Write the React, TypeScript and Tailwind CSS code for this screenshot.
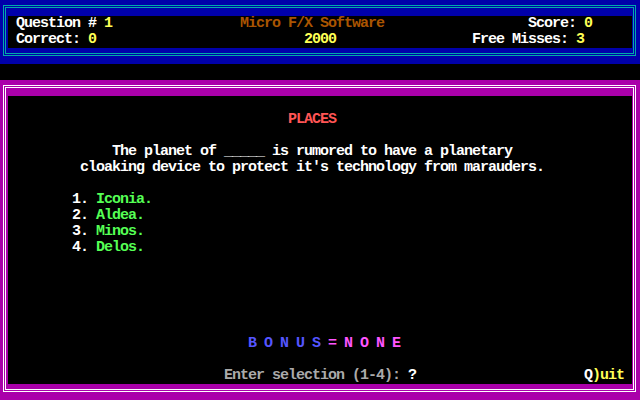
const Frame = ({
  bg,
  line,
  height,
  children
}: {
  bg: string;
  line: string;
  height: string;
  children: React.ReactNode;
}) => (
  <div className={`${bg} ${height} pt-[5px] pl-[3px] pr-[4px] pb-[8px]`}>
    <div className={`h-full border ${line} p-px`}>
      <div className={`h-full border ${line} pt-2 pl-[2px] pr-px pb-[5px]`}>
        <div className="h-full bg-black">{children}</div>
      </div>
    </div>
  </div>
);

const Row = ({ pad = "", children }: { pad?: string; children?: React.ReactNode }) => (
  <div className={`flex h-4 whitespace-pre ${pad}`}>{children}</div>
);

const options = ["Iconia.", "Aldea.", "Minos.", "Delos."];

export default function App() {
  return (
    <div
      className="w-[640px] h-[400px] bg-black overflow-hidden text-[15px] leading-4 font-bold tracking-[-1px] text-white"
      style={{ fontFamily: '"Liberation Mono", "DejaVu Sans Mono", monospace' }}
    >
      <Frame bg="bg-[#0000aa]" line="border-[#00aaaa]" height="h-16">
        <Row>
          <span className="w-[232px] pl-2">
            Question # <span className="text-[#ffff55]">1</span>
          </span>
          <span className="w-[288px] text-[#aa5500]">Micro F/X Software</span>
          <span>
            Score: <span className="text-[#ffff55]">0</span>
          </span>
        </Row>
        <Row>
          <span className="w-[296px] pl-2">
            Correct: <span className="text-[#ffff55]">0</span>
          </span>
          <span className="w-[168px] text-[#ffff55]">2000</span>
          <span>
            Free Misses: <span className="text-[#ffff55]">3</span>
          </span>
        </Row>
      </Frame>

      <div className="h-4" />

      <Frame bg="bg-[#aa00aa]" line="border-white" height="h-[320px]">
        <div className="flex flex-col h-full">
          <Row />
          <Row pad="pl-[280px]">
            <span className="text-[#ff5555]">PLACES</span>
          </Row>
          <Row />
          <Row pad="pl-[104px]">The planet of _____ is rumored to have a planetary</Row>
          <Row pad="pl-[72px]">cloaking device to protect it's technology from marauders.</Row>
          <Row />
          {options.map((o, i) => (
            <Row key={o} pad="pl-[64px]">
              {i + 1}. <span className="text-[#55ff55]">{o}</span>
            </Row>
          ))}
          <div className="flex-1" />
          <Row pad="pl-[240px]">
            <span className="text-[#5555ff]">B O N U S </span>
            <span className="text-[#ff55ff]">= N O N E</span>
          </Row>
          <Row />
          <Row pad="pl-[216px]">
            <span className="w-[360px] text-[#aaaaaa]">
              Enter selection (1-4): <span className="text-white">?</span>
            </span>
            <span>
              Q<span className="text-[#ffff55]">)uit</span>
            </span>
          </Row>
        </div>
      </Frame>
    </div>
  );
}
